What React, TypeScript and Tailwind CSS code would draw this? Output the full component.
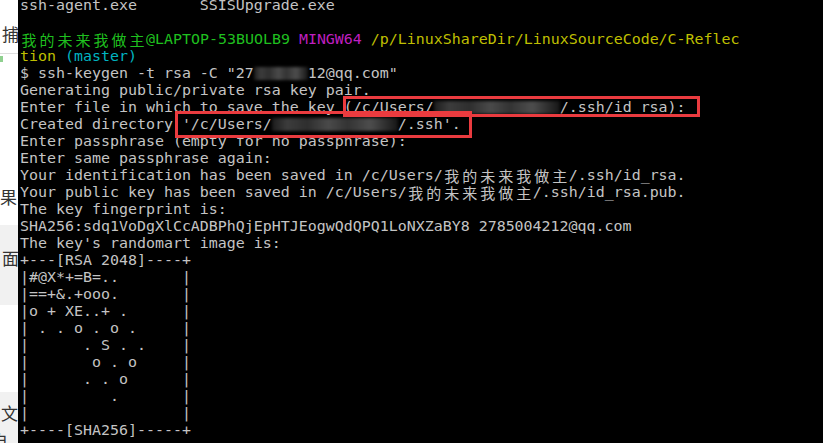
import React from "react";

// one terminal row: 17px tall, spaces kept
const Row: React.FC<{ children?: React.ReactNode; className?: string }> = ({
  children,
  className = "",
}) => <div className={`h-[17px] whitespace-pre ${className}`}>{children}</div>;

// CJK glyphs take two cells (18px) in mintty
const Txt: React.FC<{ text: string }> = ({ text }) => {
  const parts: React.ReactNode[] = [];
  let buf = "";
  [...text].forEach((ch, i) => {
    if (ch.charCodeAt(0) > 0x2e80) {
      if (buf) {
        parts.push(buf);
        buf = "";
      }
      parts.push(
        <span
          key={i}
          className="inline-block align-top w-[18px] text-center font-['Noto_Sans_CJK_SC',sans-serif] text-[15px]"
        >
          {ch}
        </span>
      );
    } else buf += ch;
  });
  if (buf) parts.push(buf);
  return <>{parts}</>;
};

// smudged-out private bits
const Smudge: React.FC<{ className: string }> = ({ className }) => (
  <span className={`inline-block align-top h-[17px] py-[2px] ${className}`}>
    <span className="block h-full blur-[1.5px] bg-[linear-gradient(90deg,#1c1c1c,#3c3c3c_12%,#2e2e2e_28%,#4a4a4a_45%,#333_60%,#4d4d4d_78%,#2a2a2a_92%,#151515)]" />
  </span>
);

const art = [
  "+---[RSA 2048]----+",
  "|#@X*+=B=..       |",
  "|==+&.+ooo.       |",
  "|o + XE..+ .      |",
  "| . . o . o .     |",
  "|      . S . .    |",
  "|       o . o     |",
  "|      . . o      |",
  "|         .       |",
  "|                 |",
  "+----[SHA256]-----+",
];

export default function App() {
  return (
    <div className="w-[823px] h-[443px] flex overflow-hidden bg-black">
      {/* window behind the terminal */}
      <div className="w-[18px] shrink-0 flex flex-col overflow-hidden font-['Noto_Sans_CJK_SC',sans-serif] text-[17px] leading-none text-[#333]">
        <div className="h-[54px] shrink-0 bg-white border-b border-[#dedede] pt-[25px] pl-[2px] whitespace-nowrap">
          捕
        </div>
        <div className="h-[171px] shrink-0 bg-white">
          <div className="w-[3px] h-[6px] mt-[2px] bg-[#8fd08f]" />
          <div className="mt-[126px] whitespace-nowrap">果</div>
        </div>
        <div className="h-[80px] shrink-0 bg-[#f1f1f1] pt-[24px] pl-[2px] whitespace-nowrap">
          面
        </div>
        <div className="h-[87px] shrink-0 bg-white" />
        <div className="flex-1 bg-[#f1f1f1] pt-[12px] whitespace-nowrap">
          <div className="flex items-center">
            <span className="w-[3px] h-px bg-[#555] mr-[1px]" />
            <span>文</span>
          </div>
          <div className="mt-[11px] -ml-[9px]">自</div>
        </div>
      </div>

      {/* mintty terminal */}
      <div className="relative flex-1 overflow-hidden pl-[2px] font-['DejaVu_Sans_Mono',monospace] text-[14.95px] leading-[17px] text-[#c4c4c4]">
        <div className="-mt-[3px]">
          <Row>ssh-agent.exe       SSISUpgrade.exe</Row>
          <Row />
          <Row>
            <span className="text-[#1fbf1f]">
              <Txt text="我的未来我做主@LAPTOP-53BUOLB9" />
            </span>{" "}
            <span className="text-[#bf1fbf]">MINGW64</span>{" "}
            <span className="text-[#bfbf00]">/p/LinuxShareDir/LinuxSourceCode/C-Reflec</span>
          </Row>
          <Row>
            <span className="text-[#bfbf00]">tion</span>{" "}
            <span className="text-[#00b4c0]">(master)</span>
          </Row>
          <Row>
            $ ssh-keygen -t rsa -C "27
            <Smudge className="w-[54px]" />
            12@qq.com"
          </Row>
          <Row>Generating public/private rsa key pair.</Row>
          <Row>
            Enter file in which to save the key (/c/Users/
            <Smudge className="w-[126px]" />
            /.ssh/id_rsa):
          </Row>
          <Row>
            Created directory '/c/Users/
            <Smudge className="w-[126px]" />
            /.ssh'.
          </Row>
          <Row>Enter passphrase (empty for no passphrase):</Row>
          <Row>Enter same passphrase again:</Row>
          <Row>
            <Txt text="Your identification has been saved in /c/Users/我的未来我做主/.ssh/id_rsa." />
          </Row>
          <Row>
            <Txt text="Your public key has been saved in /c/Users/我的未来我做主/.ssh/id_rsa.pub." />
          </Row>
          <Row>The key fingerprint is:</Row>
          <Row>SHA256:sdq1VoDgXlCcADBPhQjEpHTJEogwQdQPQ1LoNXZaBY8 2785004212@qq.com</Row>
          <Row>The key's randomart image is:</Row>
          {art.map((l, i) => (
            <Row key={i}>{l}</Row>
          ))}
        </div>

        {/* red annotation boxes */}
        <div className="absolute left-[325px] top-[96px] w-[357px] h-[21px] border-[3px] border-[#ea3b3f]" />
        <div className="absolute left-[157px] top-[111px] w-[297px] h-[27px] border-[3px] border-[#ea3b3f]" />
      </div>
    </div>
  );
}
